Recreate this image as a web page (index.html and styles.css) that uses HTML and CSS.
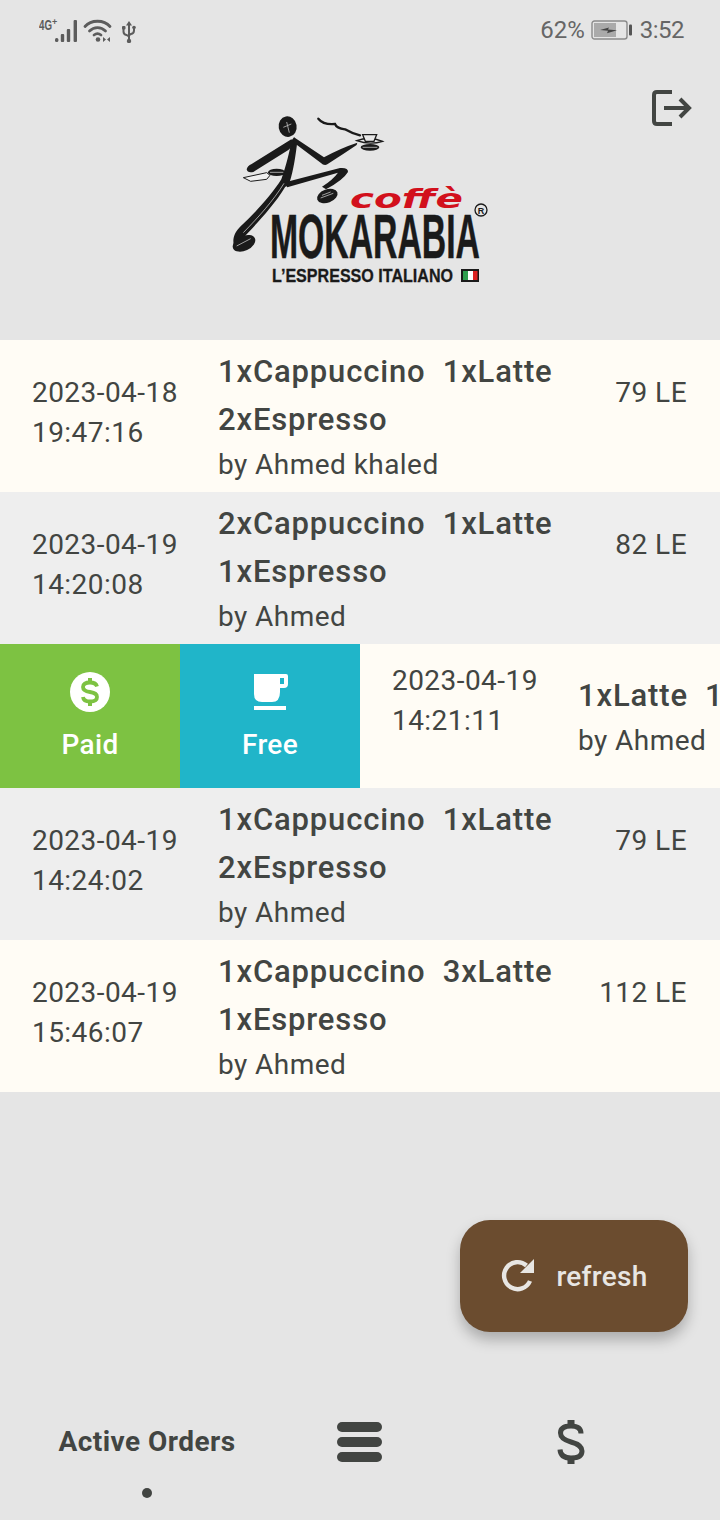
FILE: index.html
```html
<!DOCTYPE html>
<html lang="en">
<head>
    <meta charset="UTF-8">
    <meta name="viewport" content="width=device-width, initial-scale=1.0">
    <title>Active Orders - Mokarabia</title>
    <link rel="stylesheet" href="styles.css">
</head>
<body>
    <div class="app">
        <div class="status-bar">
            <div class="status-left">
                <svg class="net-icons" width="100" height="28" viewBox="0 0 100 28">
                    <text x="0" y="15" class="net-label" textLength="13" lengthAdjust="spacingAndGlyphs">4G</text>
                    <text x="13" y="10" class="net-plus">+</text>
                    <g fill="#5c5c5c">
                        <rect x="16" y="23" width="3.400" height="4" rx="1.500"/>
                        <rect x="21.800" y="19" width="3.400" height="8" rx="1"/>
                        <rect x="27.800" y="14" width="3.400" height="13" rx="1"/>
                        <rect x="34.600" y="5" width="3.400" height="22" rx="1"/>
                    </g>
                    <g fill="none" stroke="#5c5c5c" stroke-width="2.800" stroke-linecap="round">
                        <path d="M46 11.500C52 4.500 65 4.500 71 11.500"/>
                        <path d="M50.500 16C55 11.500 62 11.500 66.500 16"/>
                        <path d="M55 20C57 18.500 60 18.500 62 20"/>
                    </g>
                    <circle cx="59" cy="24.500" r="2.300" fill="#5c5c5c"/>
                    <path d="M67 24.500l-3-2.500v5zM68 24.500l3-2.500v5z" fill="#5c5c5c"/>
                    <g fill="none" stroke="#5c5c5c" stroke-width="2">
                        <path d="M90 9v17"/>
                        <path d="M84.500 14v2.500q0 3 3 3.500l2.500 1.500"/>
                        <path d="M95 14v1.500q0 3-3 3.500l-2 1"/>
                    </g>
                    <path d="M90 6l3 4.500h-6z" fill="#5c5c5c"/>
                    <circle cx="90" cy="26" r="2.200" fill="#5c5c5c"/>
                    <rect x="83" y="11" width="3.500" height="3.500" rx="1" fill="#5c5c5c"/>
                    <circle cx="95" cy="12.500" r="1.800" fill="#5c5c5c"/>
                </svg>
            </div>
            <div class="status-right">
                <span>62%</span>
                <svg class="battery" width="42" height="20" viewBox="0 0 42 20">
                    <rect x="1" y="1" width="35" height="18" rx="2.500" fill="none" stroke="#8b8b8b" stroke-width="1.400"/>
                    <rect x="3" y="3" width="22" height="14" fill="#aaa"/>
                    <path d="M9 10l9-2.500-1 2 9 .8-10 3 1-2.500z" fill="#444"/>
                    <rect x="38" y="4.500" width="3" height="11" rx="1" fill="#555"/>
                </svg>
                <span class="clock">3:52</span>
            </div>
        </div>

        <div class="header">
            <svg class="logo" width="280" height="200" viewBox="0 0 280 200">
                <!-- runner, traced in 3x coordinates -->
                <g transform="scale(0.3333)" fill="#1a1a1a">
                    <path d="M222 112L232 125C226 170 222 205 208 250L195 262C160 320 110 370 78 405C62 422 52 430 45 440C34 425 42 397 62 379C110 334 155 284 184 238C200 190 208 160 214 122Z"/>
                    <path d="M214 118L226 130L205 150L100 216Q82 220 80 208Q82 198 95 192Z"/>
                    <path d="M222 112L312 172Q360 145 412 128L410 135Q370 162 322 193Q312 198 302 188L222 128Z"/>
                    <path d="M190 248L360 204Q385 202 384 216Q370 240 318 268L306 260Q338 240 354 218L202 262Z"/>
                    <ellipse cx="203" cy="80" rx="27" ry="31" transform="rotate(-10 203 80)"/>
                    <ellipse cx="322" cy="288" rx="32" ry="20" transform="rotate(-20 322 288)"/>
                    <ellipse cx="72" cy="430" rx="36" ry="22" transform="rotate(-25 72 430)"/>
                    <ellipse cx="450" cy="142" rx="28" ry="10"/>
                    <path d="M295 56Q310 75 345 72Q350 85 375 88Q395 100 420 106" fill="none" stroke="#1a1a1a" stroke-width="7" stroke-linecap="round"/>
                    <path d="M70 233L140 218L150 226L140 238L92 244Z" fill="#f0f0f0" stroke="#1a1a1a" stroke-width="3"/>
                    <ellipse cx="170" cy="217" rx="26" ry="11"/>
                    <path d="M410 122Q450 108 488 124Q450 136 410 122Z" fill="#e8e8e8" stroke="#1a1a1a" stroke-width="4"/>
                    <path d="M428 104H470L462 124H436Z" fill="#e8e8e8" stroke="#1a1a1a" stroke-width="4"/>
                    <path d="M70 398C115 352 160 302 192 250" fill="none" stroke="#e5e5e5" stroke-width="2"/>
                    <g fill="none" stroke="#bbb" stroke-width="2.500">
                        <path d="M190 82L214 72M200 66L208 98"/>
                        <path d="M302 294L340 280M306 286L332 276"/>
                        <path d="M50 438L92 416"/>
                        <path d="M428 142H472"/>
                        <path d="M150 217H190"/>
                    </g>
                </g>
                <!-- wordmark -->
                <text x="130" y="108" class="logo-coffe" textLength="113" lengthAdjust="spacingAndGlyphs">coffè</text>
                <text x="50" y="158" class="logo-name" textLength="210" lengthAdjust="spacingAndGlyphs">MOKARABIA</text>
                <text x="52" y="182" class="logo-tag" textLength="181" lengthAdjust="spacingAndGlyphs">L’ESPRESSO ITALIANO</text>
                <circle cx="261" cy="110" r="6" fill="none" stroke="#1a1a1a" stroke-width="1.300"/>
                <text x="261" y="113.500" class="logo-reg">R</text>
                <rect x="241" y="169" width="18" height="13" fill="#1a1a1a"/>
                <rect x="243" y="171" width="5" height="9" fill="#2f9e4f"/>
                <rect x="248" y="171" width="5" height="9" fill="#fff"/>
                <rect x="253" y="171" width="4.500" height="9" fill="#d22"/>
            </svg>
            <svg class="logout" width="44" height="40" viewBox="0 0 44 40" fill="none" stroke="#424542" stroke-width="4">
                <path d="M24 2H9Q6 2 6 5V31Q6 34 9 34H24"/>
                <path d="M16 18H41"/>
                <path d="M32 9L41 18L32 27"/>
            </svg>
        </div>

        <div class="orders">
            <div class="order cream">
                <div class="order-date">2023-04-18<br>19:47:16</div>
                <div class="order-info">
                    <div class="order-items">1xCappuccino&nbsp; 1xLatte 2xEspresso</div>
                    <div class="order-by">by Ahmed khaled</div>
                </div>
                <div class="order-price">79 LE</div>
            </div>
            <div class="order grey">
                <div class="order-date">2023-04-19<br>14:20:08</div>
                <div class="order-info">
                    <div class="order-items">2xCappuccino&nbsp; 1xLatte 1xEspresso</div>
                    <div class="order-by">by Ahmed</div>
                </div>
                <div class="order-price">82 LE</div>
            </div>
            <div class="order-swiped cream">
                <div class="action paid">
                    <svg width="44" height="44" viewBox="0 0 44 44">
                        <circle cx="22" cy="22" r="20" fill="#fff"/>
                        <path d="M29 16.500Q28 12.500 22 12.500Q15 12.500 15 17Q15 21 22 22Q29 23 29 27Q29 31.500 22 31.500Q15.500 31.500 15 27" fill="none" stroke="#7dc242" stroke-width="3.800"/>
                        <path d="M22 8v5M22 31v5" stroke="#7dc242" stroke-width="4"/>
                    </svg>
                    <span>Paid</span>
                </div>
                <div class="action free">
                    <svg width="44" height="44" viewBox="0 0 44 44">
                        <path d="M6 4H38Q40 4 40 6V14Q40 18 36 18H32V22Q32 32 24 32H14Q6 32 6 24z" fill="#fff"/>
                        <rect x="32" y="8" width="4" height="6" fill="#20b5c9"/>
                        <rect x="6" y="36" width="32" height="4" fill="#fff"/>
                    </svg>
                    <span>Free</span>
                </div>
                <div class="order-cut">
                    <div class="order-date">2023-04-19<br>14:21:11</div>
                    <div class="order-info cut-info">
                        <div class="order-items nowrap">1xLatte&nbsp; 1xEspresso</div>
                        <div class="order-by">by Ahmed</div>
                    </div>
                </div>
            </div>
            <div class="order grey">
                <div class="order-date">2023-04-19<br>14:24:02</div>
                <div class="order-info">
                    <div class="order-items">1xCappuccino&nbsp; 1xLatte 2xEspresso</div>
                    <div class="order-by">by Ahmed</div>
                </div>
                <div class="order-price">79 LE</div>
            </div>
            <div class="order cream">
                <div class="order-date">2023-04-19<br>15:46:07</div>
                <div class="order-info">
                    <div class="order-items">1xCappuccino&nbsp; 3xLatte 1xEspresso</div>
                    <div class="order-by">by Ahmed</div>
                </div>
                <div class="order-price">112 LE</div>
            </div>
        </div>

        <div class="fab-row">
            <button class="fab">
                <svg width="36" height="36" viewBox="0 0 36 36">
                    <path d="M30 23A13.500 13.500 0 1 1 26.500 7.500" fill="none" stroke="#e8e6e3" stroke-width="4.400"/>
                    <path d="M34 1V15H20z" fill="#e8e6e3"/>
                </svg>
                <span>refresh</span>
            </button>
        </div>

        <div class="bottom-nav">
            <div class="tab">
                <span class="tab-label">Active Orders</span>
                <span class="tab-dot"></span>
            </div>
            <div class="tab">
                <svg width="46" height="40" viewBox="0 0 46 40" fill="#424542">
                    <rect x="0" y="0" width="45" height="10" rx="5"/>
                    <rect x="0" y="15" width="45" height="10" rx="5"/>
                    <rect x="0" y="30" width="45" height="10" rx="5"/>
                </svg>
            </div>
            <div class="tab tab-dollar">
                <svg width="28" height="46" viewBox="0 0 28 46">
                    <path d="M24 14.500Q24 7 14 7Q3.500 7 3.500 14Q3.500 20 14 23Q25 26 25 32Q25 39 14 39Q3.500 39 3 30.500" fill="none" stroke="#424542" stroke-width="5"/>
                    <path d="M14 1v6M14 39v6" stroke="#424542" stroke-width="7"/>
                </svg>
            </div>
        </div>
    </div>
</body>
</html>
```
FILE: styles.css
```css
* { box-sizing: border-box; }
body { margin: 0; font-family: Roboto, sans-serif; background-color: #e5e5e5; color: #424542; }
.app { width: 720px; height: 1520px; display: flex; flex-direction: column; overflow: hidden; }

.status-bar { height: 60px; display: flex; justify-content: space-between; align-items: center; padding: 0 36px 0 39px; color: #666; font-size: 24px; }
.status-left { display: flex; height: 28px; margin-top: -2px; }
.status-right { display: flex; align-items: center; gap: 7px; }
.battery { margin-left: -1px; }
.clock { letter-spacing: -0.5px; }
.net-label { font-family: "Liberation Sans", sans-serif; font-size: 14px; font-weight: bold; fill: #5c5c5c; }
.net-plus { font-family: "Liberation Sans", sans-serif; font-size: 9px; font-weight: bold; fill: #5c5c5c; }

.header { height: 280px; display: flex; justify-content: center; position: relative; }
.logo { margin-top: 40px; }
.logout { position: absolute; top: 30px; right: 28px; }
.logo-coffe { font-family: "DejaVu Sans", sans-serif; font-size: 27px; font-weight: bold; font-style: italic; fill: #d2101c; }
.logo-name { font-family: "Liberation Sans", sans-serif; font-size: 63px; font-weight: bold; fill: #1a1a1a; stroke: #1a1a1a; stroke-width: 0.5; }
.logo-tag { font-family: "Liberation Sans", sans-serif; font-size: 19px; font-weight: bold; fill: #1a1a1a; stroke: #1a1a1a; stroke-width: 0.3; }
.logo-reg { font-family: "Liberation Sans", sans-serif; font-size: 9px; font-weight: bold; fill: #1a1a1a; text-anchor: middle; }

.orders { display: flex; flex-direction: column; }
.cream { background-color: #fffcf5; }
.grey { background-color: #eeeeee; }

.order { height: 152px; display: flex; padding-left: 32px; padding-right: 32px; }
.order-date { width: 186px; flex-shrink: 0; padding-top: 33px; font-size: 28px; line-height: 40px; letter-spacing: 0.45px; }
.order-info { width: 370px; flex-shrink: 0; padding-top: 8px; }
.order-items { font-size: 31px; font-weight: 500; line-height: 48px; width: 350px; letter-spacing: 0.85px; }
.order-by { font-size: 28px; line-height: 40px; margin-top: 1px; letter-spacing: 0.45px; }
.order-price { flex: 1; padding-top: 33px; padding-right: 1px; font-size: 28px; line-height: 40px; text-align: right; white-space: nowrap; letter-spacing: 0.45px; }

.order-swiped { height: 144px; display: flex; overflow: hidden; }
.action { width: 180px; flex-shrink: 0; display: flex; flex-direction: column; align-items: center; padding-top: 26px; color: #fff; font-size: 28px; font-weight: 500; letter-spacing: 0.3px; }
.action span { margin-top: 11px; line-height: 40px; }
.paid { background-color: #7dc242; }
.free { background-color: #20b5c9; }
.order-cut { display: flex; padding-left: 32px; white-space: nowrap; }
.order-cut .order-date { padding-top: 17px; }
.cut-info { padding-top: 28px; }
.nowrap { white-space: nowrap; width: auto; }
.cut-info .order-by { margin-top: 1px; }

.fab-row { flex: 1; display: flex; justify-content: flex-end; align-items: flex-start; padding: 128px 32px 0 0; }
.fab { width: 228px; height: 112px; display: flex; align-items: center; justify-content: center; gap: 20px; border: none; border-radius: 30px; background-color: #6b4c2f; color: #e8e6e3; font-family: Roboto, sans-serif; font-size: 28px; font-weight: 500; letter-spacing: 0.3px; box-shadow: 0 8px 14px rgba(0,0,0,0.25); }

.bottom-nav { height: 140px; display: grid; grid-template-columns: 294px 132px 294px; }
.tab { display: flex; flex-direction: column; align-items: center; padding-top: 42px; }
.tab-dollar { padding-top: 39px; padding-right: 4px; }
.tab-label { font-size: 28px; font-weight: 700; line-height: 40px; letter-spacing: 0.45px; }
.tab-dot { width: 10px; height: 10px; border-radius: 50%; background-color: #424542; margin-top: 26px; }
```
